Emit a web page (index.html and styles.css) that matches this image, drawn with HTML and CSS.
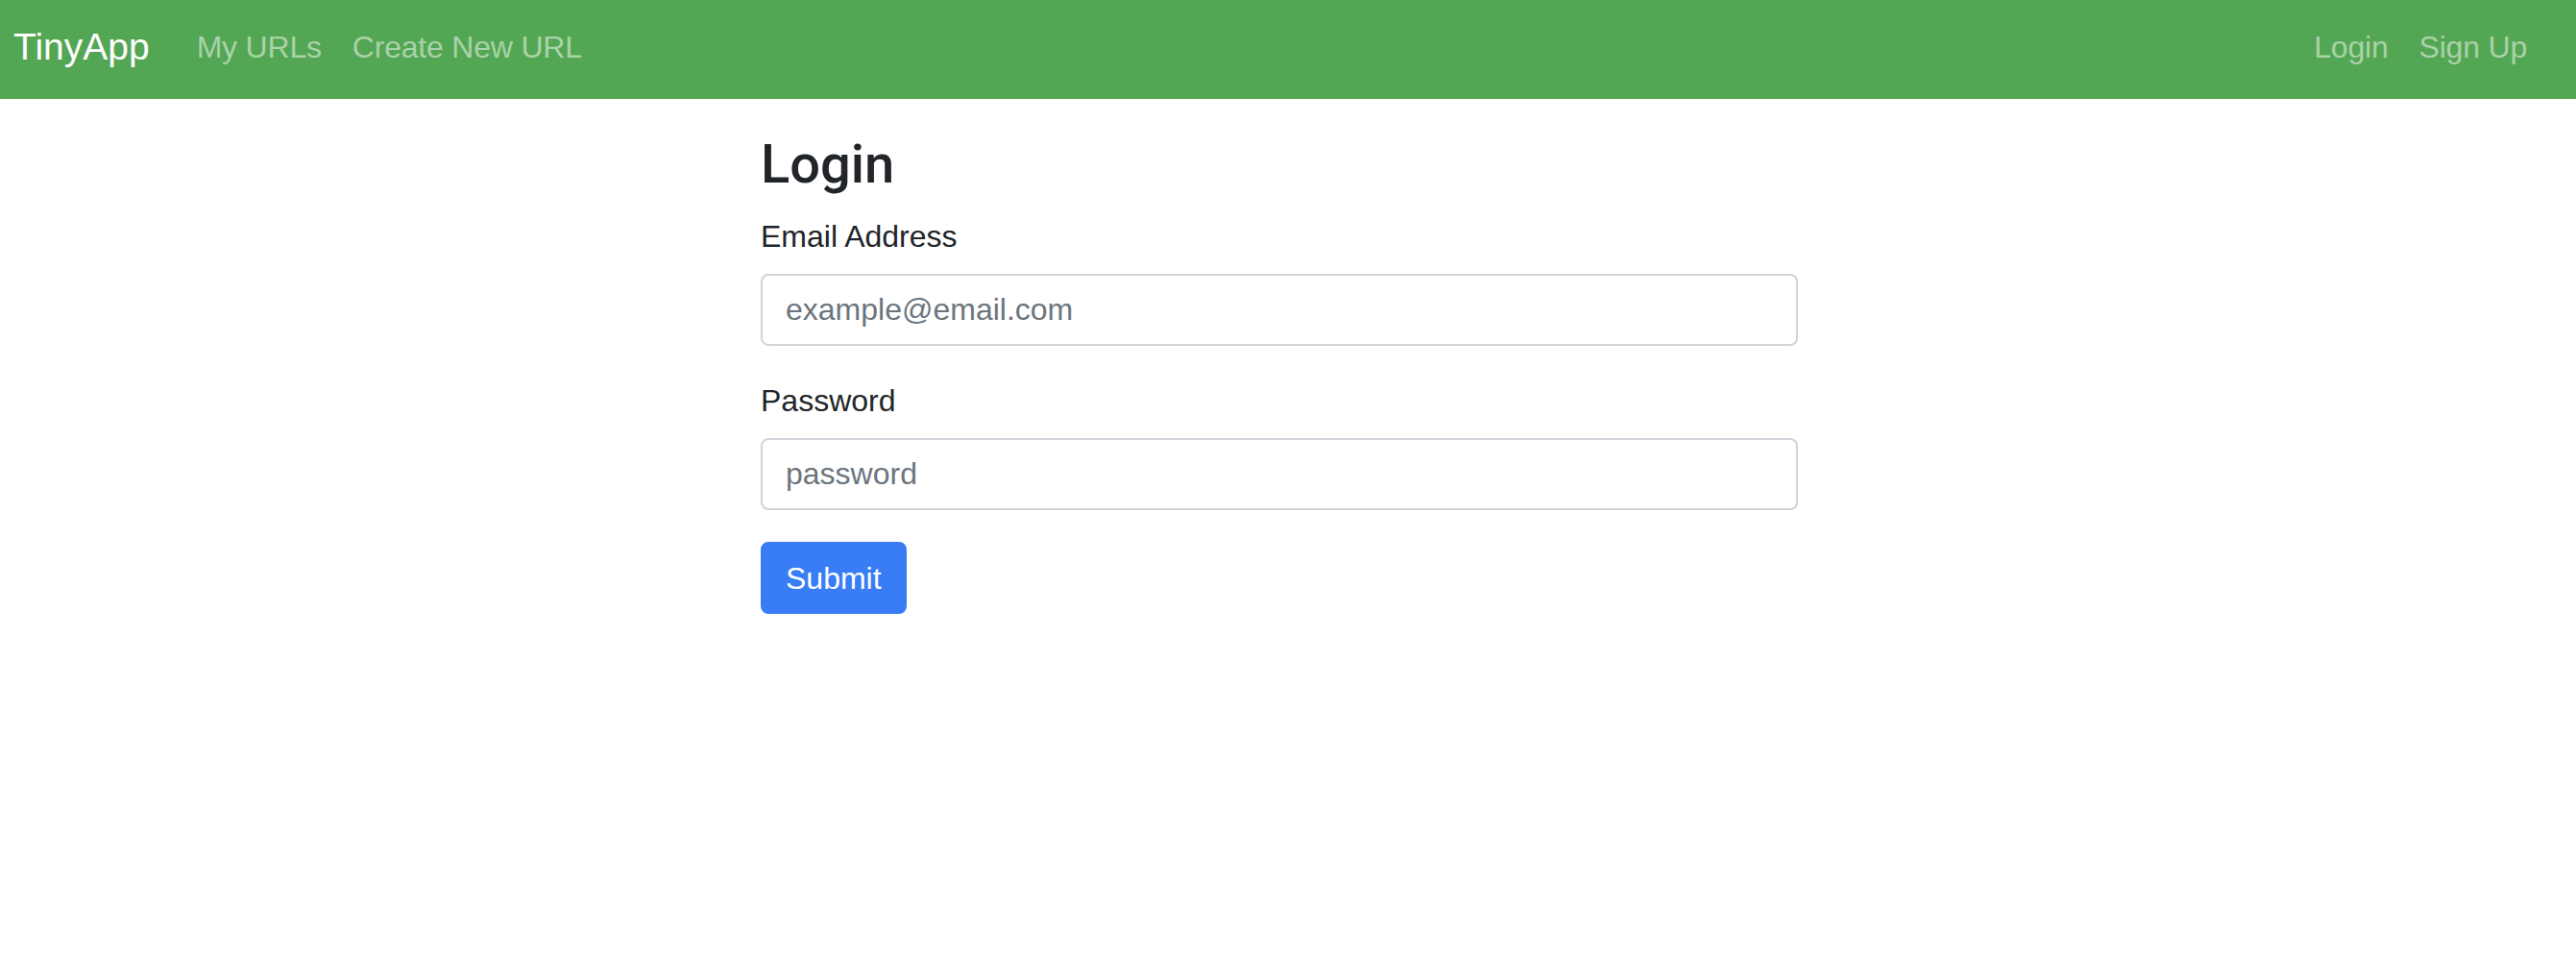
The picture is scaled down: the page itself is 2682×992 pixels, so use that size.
FILE: index.html
```html
<!DOCTYPE html>
<html lang="en">
<head>
<meta charset="utf-8">
<title>TinyApp - Login</title>
<link rel="stylesheet" href="styles.css">
</head>
<body>
<nav class="navbar">
  <a class="brand" href="#">TinyApp</a>
  <ul class="nav-links">
    <li><a class="nav-link" href="#">My URLs</a></li>
    <li><a class="nav-link" href="#">Create New URL</a></li>
  </ul>
  <ul class="nav-links nav-right">
    <li><a class="nav-link" href="#">Login</a></li>
    <li><a class="nav-link" href="#">Sign Up</a></li>
  </ul>
</nav>
<main class="container">
  <h3 class="title">Login</h3>
  <form class="form">
    <div class="form-group">
      <label class="label" for="email">Email Address</label>
      <input class="input" id="email" type="email" placeholder="example@email.com">
    </div>
    <div class="form-group">
      <label class="label" for="password">Password</label>
      <input class="input" id="password" type="password" placeholder="password">
    </div>
    <button class="btn" type="submit">Submit</button>
  </form>
</main>
</body>
</html>
```

FILE: styles.css
```css
* { box-sizing: border-box; }

html, body {
  margin: 0;
  padding: 0;
  background: #ffffff;
  font-family: "Liberation Sans", Arial, sans-serif;
  color: #212529;
}

.navbar {
  display: flex;
  align-items: center;
  height: 103px;
  padding: 0 35px 5px 14px;
  background: #53a653;
}

.brand {
  font-size: 39px;
  line-height: 1.5;
  color: #ffffff;
  text-decoration: none;
  margin-right: 33px;
}

.nav-links {
  display: flex;
  list-style: none;
  margin: 0;
  padding: 0;
}

.nav-right {
  margin-left: auto;
}

.nav-link {
  display: block;
  padding: 16px 16px;
  font-size: 32px;
  line-height: 48px;
  letter-spacing: -0.2px;
  color: rgba(255, 255, 255, 0.5);
  text-decoration: none;
}

.container {
  width: 1080px;
  margin-left: 792px;
  padding-top: 35px;
}

.title {
  margin: 0 0 17px;
  font-family: Roboto, "Liberation Sans", Arial, sans-serif;
  font-size: 56px;
  line-height: 1.2;
  font-weight: 500;
  color: #212529;
}

.form-group {
  margin-bottom: 33px;
}

.label {
  display: inline-block;
  margin-bottom: 15px;
  font-size: 32px;
  line-height: 48px;
  color: #212529;
}

.input {
  display: block;
  width: 100%;
  height: 75px;
  padding: 12px 24px;
  font-family: inherit;
  font-size: 32px;
  line-height: 48px;
  color: #495057;
  background: #ffffff;
  border: 2px solid #ced4da;
  border-radius: 8px;
  outline: none;
}

.input::placeholder {
  color: #6c757d;
  opacity: 1;
}

.btn {
  display: inline-block;
  height: 75px;
  padding: 12px 24px;
  font-family: inherit;
  font-size: 32px;
  line-height: 48px;
  color: #ffffff;
  background: #387df6;
  border: 2px solid #387df6;
  border-radius: 8px;
  cursor: pointer;
}
```
